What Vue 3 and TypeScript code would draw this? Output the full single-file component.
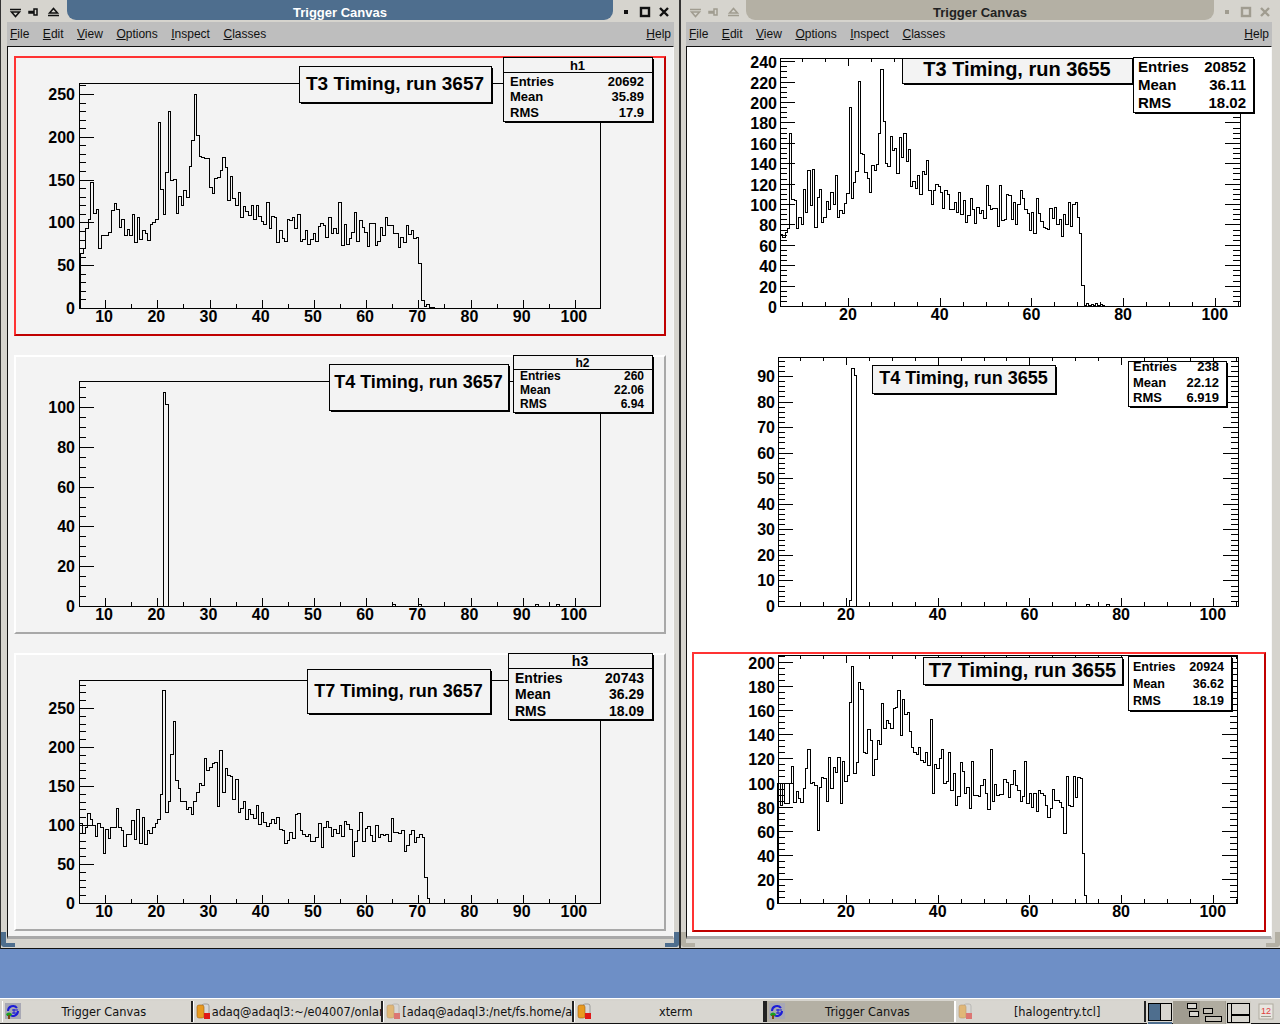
<script setup lang="ts">
interface Hist {
  ox: number // crop origin the samples were read in, values are in 3x crop pixels
  oy: number
  start: number
  bin: number
  ys: number[]
}

interface Stat {
  x: number
  y: number
  w: number
  h: number
  size: number
  head?: string
  line?: number
  fill: string
  textInset: number
  inset: number
  base: number[]
  rows: [string, string][]
}

interface Plot {
  left: number
  right: number
  top: number
  bottom: number
  labelGap: number
  labelDy: number
  labelDx: number
  mirror: boolean
  xAt: [number, number] // pixel of x = 20, pixels per unit
  xMajor: number
  yPerUnit: number
  yMajor: number
  yMinor: number
  yMax: number
  hist: Hist
  blips?: number[] // single low entries far from the peak
  title: { text: string; x: number; y: number; w: number; h: number; size: number; base: number; shadow: number }
  stat: Stat
}

interface Pad {
  x: number
  y: number
  w: number
  h: number
  kind: 'selected' | 'raised' | 'flat'
  plot: Plot
}

const t3Left = [520,503,443,418,307,400,388,505,466,466,466,455,391,370,388,442,418,466,448,466,403,485,412,478,450,460,481,433,426,418,127,328,403,277,94,300,298,400,349,376,331,352,259,181,43,166,227,232,233,233,322,340,295,291,271,230,260,361,287,354,376,335,412,379,392,406,376,418,376,408,424,431,365,445,407,410,487,449,473,484,418,421,412,445,403,484,478,451,493,478,458,484,437,428,436,472,412,459,445,458,365,496,433,493,475,455,395,482,421,442,455,499,430,430,496,482,442,466,412,436,436,459,459,502,470,487,436,463,451,475,470,550,661,678,671,680,682,684]
const t7Left = [428,458,442,398,418,436,469,430,442,520,448,475,442,442,385,442,451,499,463,463,421,478,388,490,412,493,451,460,442,430,418,343,31,397,364,223,124,301,325,364,364,388,381,403,364,337,310,316,235,271,262,250,247,379,211,337,265,286,289,358,298,397,385,364,418,388,403,415,376,433,397,427,439,430,418,430,412,448,451,490,481,457,475,403,400,451,463,469,463,484,484,472,430,502,442,424,442,469,448,460,436,469,424,433,448,529,484,451,397,484,445,438,466,484,436,472,463,466,463,484,415,457,457,460,451,514,496,463,451,487,470,463,472,592,655]
const t3Right = [552,562,545,535,250,447,451,535,502,523,418,485,361,464,358,532,442,418,517,502,454,476,427,461,376,502,481,490,460,430,170,445,395,364,94,310,313,367,385,427,346,361,343,250,56,214,340,349,259,300,295,370,262,322,250,334,298,409,394,415,376,433,364,373,331,421,463,421,403,409,427,475,421,433,476,478,457,487,427,493,451,517,496,445,478,520,472,490,481,505,406,466,478,475,475,529,406,511,508,433,436,508,457,523,463,421,445,478,490,541,487,550,445,490,514,532,535,538,475,505,472,523,508,559,493,523,457,529,463,457,502,550,706,765,760,765,762,765,760,765,762,765,768]
const t7Right = [400,466,400,460,460,400,349,455,424,445,457,415,355,298,400,397,406,541,412,382,385,454,320,415,352,367,320,460,334,394,376,157,49,370,337,97,118,307,310,238,271,376,328,271,283,160,235,211,220,235,175,172,121,256,148,193,187,244,292,307,313,292,331,337,307,346,208,430,343,355,325,298,400,394,307,421,370,466,439,337,364,430,412,475,334,436,436,439,406,388,430,478,298,454,403,436,433,433,388,397,442,403,361,406,421,454,439,334,460,430,472,430,484,421,430,436,466,502,475,418,451,451,457,472,550,379,466,469,379,442,382,385,610,736]

const leftStat = (x: number, y: number, w: number, h: number, size: number, head: string, line: number, base: number[], vals: string[]): Stat => ({
  x, y, w, h, size, head, line, base, fill: '#f3f3f3', textInset: 7, inset: 5,
  rows: [['Entries', vals[0]], ['Mean', vals[1]], ['RMS', vals[2]]],
})
const rightStat = (x: number, y: number, w: number, h: number, size: number, base: number[], vals: string[]): Stat => ({
  x, y, w, h, size, base, fill: '#ffffff', textInset: 5, inset: 4,
  rows: [['Entries', vals[0]], ['Mean', vals[1]], ['RMS', vals[2]]],
})

const leftPads: Pad[] = [
  {
    x: 14, y: 56, w: 652, h: 280, kind: 'selected',
    plot: {
      left: 79, right: 600, top: 83, bottom: 308, labelGap: 4, labelDy: 6, labelDx: -1, mirror: false,
      xAt: [157.3, 5.22], xMajor: 10, yPerUnit: 0.856, yMajor: 50, yMinor: 10, yMax: 263,
      hist: { ox: 60, oy: 80, start: 60, bin: 7.75, ys: t3Left },
      title: { text: 'T3 Timing, run 3657', x: 299, y: 66, w: 192, h: 36, size: 19, base: 90, shadow: 2 },
      stat: leftStat(503, 57, 149, 64, 13, 'h1', 72, [86, 101, 117], ['20692', '35.89', '17.9']),
    },
  },
  {
    x: 14, y: 355, w: 652, h: 279, kind: 'raised',
    plot: {
      left: 79, right: 600, top: 381, bottom: 606, labelGap: 4, labelDy: 6, labelDx: -1, mirror: false,
      xAt: [157.3, 5.22], xMajor: 10, yPerUnit: 1.99, yMajor: 20, yMinor: 5, yMax: 113,
      hist: { ox: 0, oy: 330, start: 488, bin: 7.83, ys: [187, 222] },
      blips: [392, 418, 535, 556],
      title: { text: 'T4 Timing, run 3657', x: 329, y: 364, w: 179, h: 46, size: 18, base: 388, shadow: 2 },
      stat: leftStat(513, 355, 139, 57, 12, 'h2', 369, [380, 394, 408], ['260', '22.06', '6.94']),
    },
  },
  {
    x: 14, y: 653, w: 652, h: 278, kind: 'raised',
    plot: {
      left: 79, right: 600, top: 680, bottom: 903, labelGap: 4, labelDy: 6, labelDx: -1, mirror: false,
      xAt: [157.3, 5.22], xMajor: 10, yPerUnit: 0.78, yMajor: 50, yMinor: 10, yMax: 285,
      hist: { ox: 60, oy: 680, start: 58, bin: 7.78, ys: t7Left },
      title: { text: 'T7 Timing, run 3657', x: 307, y: 669, w: 183, h: 44, size: 18, base: 697, shadow: 2 },
      stat: leftStat(508, 653, 144, 66, 14, 'h3', 668, [683, 699, 716], ['20743', '36.29', '18.09']),
    },
  },
]

const rightPads: Pad[] = [
  {
    x: 692, y: 52, w: 574, h: 288, kind: 'flat',
    plot: {
      left: 780, right: 1240, top: 58, bottom: 306, labelGap: 3, labelDy: 7, labelDx: 0, mirror: true,
      xAt: [848, 4.585], xMajor: 20, yPerUnit: 1.02, yMajor: 20, yMinor: 5, yMax: 243,
      hist: { ox: 760, oy: 50, start: 60, bin: 6.85, ys: t3Right },
      title: { text: 'T3 Timing, run 3655', x: 902, y: 58, w: 230, h: 25, size: 20, base: 76, shadow: 2 },
      stat: rightStat(1133, 57, 120, 55, 15, [72, 90, 108], ['20852', '36.11', '18.02']),
    },
  },
  {
    x: 692, y: 348, w: 574, h: 296, kind: 'flat',
    plot: {
      left: 778, right: 1238, top: 357, bottom: 606, labelGap: 3, labelDy: 6, labelDx: 0, mirror: true,
      xAt: [846, 4.585], xMajor: 20, yPerUnit: 2.556, yMajor: 10, yMinor: 2, yMax: 97,
      hist: { ox: 0, oy: 0, start: 2547, bin: 7.2, ys: [1800, 1104, 1125] },
      blips: [1086, 1106],
      title: { text: 'T4 Timing, run 3655', x: 872, y: 365, w: 183, h: 28, size: 18, base: 384, shadow: 2 },
      stat: rightStat(1128, 361, 98, 45, 13, [371, 387, 402], ['238', '22.12', '6.919']),
    },
  },
  {
    x: 692, y: 652, w: 574, h: 280, kind: 'selected',
    plot: {
      left: 778, right: 1237, top: 655, bottom: 903, labelGap: 3, labelDy: 7, labelDx: 0, mirror: true,
      xAt: [846, 4.585], xMajor: 20, yPerUnit: 1.205, yMajor: 20, yMinor: 5, yMax: 205,
      hist: { ox: 760, oy: 650, start: 52, bin: 6.92, ys: t7Right },
      title: { text: 'T7 Timing, run 3655', x: 923, y: 657, w: 199, h: 27, size: 20, base: 677, shadow: 2 },
      stat: rightStat(1128, 656, 103, 54, 12.5, [671, 688, 705], ['20924', '36.62', '18.19']),
    },
  },
]

const windows = [
  { title: 'Trigger Canvas', active: true, pads: leftPads },
  { title: 'Trigger Canvas', active: false, pads: rightPads },
]

const menus = [
  ['F', 'ile'],
  ['E', 'dit'],
  ['V', 'iew'],
  ['O', 'ptions'],
  ['I', 'nspect'],
  ['C', 'lasses'],
]

const tasks = [
  { label: 'Trigger Canvas', icon: 'root', dim: false, current: false },
  { label: 'adaq@adaql3:~/e04007/onlar', icon: 'term', dim: false, current: false },
  { label: '[adaq@adaql3:/net/fs.home/a', icon: 'term', dim: true, current: false },
  { label: 'xterm', icon: 'term', dim: false, current: false },
  { label: 'Trigger Canvas', icon: 'root', dim: false, current: true },
  { label: '[halogentry.tcl]', icon: 'term', dim: true, current: false },
]

const snap = (v: number) => Math.round(v) + 0.5

function histPath(p: Plot) {
  const h = p.hist
  const px = (z: number) => h.ox + z / 3
  let d = `M${snap(px(h.start))} ${snap(p.bottom)}`
  h.ys.forEach((y, i) => {
    d += `V${snap(h.oy + y / 3)}H${snap(px(h.start + (i + 1) * h.bin))}`
  })
  d += `V${snap(p.bottom)}`
  for (const x of p.blips ?? []) d += `M${x + 0.5} ${p.bottom}v-2h3v2`
  return d
}

function ticksPath(p: Plot) {
  let d = ''
  for (let v = 0; v <= p.yMax; v += p.yMinor) {
    const y = snap(p.bottom - v * p.yPerUnit)
    const len = v % p.yMajor === 0 ? 15 : 7
    d += `M${p.left} ${y}h${len}`
    if (p.mirror) d += `M${p.right} ${y}h${-len}`
  }
  for (let v = 5; v <= 105; v += 5) {
    const x = snap(p.xAt[0] + (v - 20) * p.xAt[1])
    if (x <= p.left || x >= p.right) continue
    const len = v % p.xMajor === 0 ? 8 : 4
    d += `M${x} ${p.bottom}v${-len}`
    if (p.mirror) d += `M${x} ${p.top}v${len}`
  }
  return d
}

function yLabels(p: Plot) {
  const out: { t: number; y: number }[] = []
  for (let v = 0; v <= p.yMax; v += p.yMajor) out.push({ t: v, y: p.bottom - v * p.yPerUnit + p.labelDy })
  return out
}

function xLabels(p: Plot) {
  const out: { t: number; x: number }[] = []
  for (let v = p.xMajor; v <= 100; v += p.xMajor) out.push({ t: v, x: p.xAt[0] + (v - 20) * p.xAt[1] + p.labelDx })
  return out
}
</script>

<template>
  <div class="desktop">
    <div class="windows">
      <section v-for="(win, w) in windows" :key="w" class="window" :class="win.active ? 'active' : 'inactive'">
        <header class="titlebar">
          <svg class="btns-left" width="66" height="22" viewBox="0 0 66 22">
            <path d="M9 9.5h11M10.5 12h8l-4 4.5z" />
            <path d="M28 11.5h5v-2.5h3v6h-3v-2h-5z" />
            <path d="M47 15.5h11M48.5 13h8l-4-4.5z" />
          </svg>
          <div class="title-text">{{ win.title }}</div>
          <svg class="btns-right" width="66" height="22" viewBox="0 0 66 22">
            <rect class="solid" x="11" y="10" width="4" height="4" />
            <rect class="thick" x="28" y="8" width="8" height="8" />
            <path class="thick" d="M47 8l8 8M55 8l-8 8" />
          </svg>
        </header>
        <div class="win-body">
          <nav class="menubar">
            <span v-for="m in menus" :key="m[0]"><u>{{ m[0] }}</u>{{ m[1] }}</span>
            <span class="help"><u>H</u>elp</span>
          </nav>
          <main class="canvas">
            <div
              v-for="pad in win.pads"
              :key="pad.y"
              class="pad"
              :class="pad.kind"
              :style="{ width: pad.w + 'px', height: pad.h + 'px' }"
            >
              <svg
                class="plot"
                :width="pad.w - 4"
                :height="pad.h - 4"
                :viewBox="`${pad.x + 2} ${pad.y + 2} ${pad.w - 4} ${pad.h - 4}`"
              >
                <rect class="frame" :x="pad.plot.left + 0.5" :y="pad.plot.top + 0.5" :width="pad.plot.right - pad.plot.left" :height="pad.plot.bottom - pad.plot.top" />
                <path class="line" :d="ticksPath(pad.plot)" />
                <path class="line" :d="histPath(pad.plot)" />
                <text
                  v-for="l in yLabels(pad.plot)"
                  :key="'y' + l.t"
                  class="axis-label"
                  text-anchor="end"
                  :x="pad.plot.left - pad.plot.labelGap"
                  :y="l.y"
                >{{ l.t }}</text>
                <text
                  v-for="l in xLabels(pad.plot)"
                  :key="'x' + l.t"
                  class="axis-label"
                  text-anchor="middle"
                  :x="l.x"
                  :y="pad.plot.bottom + 14"
                >{{ l.t }}</text>

                <!-- title box -->
                <rect :x="pad.plot.title.x + pad.plot.title.shadow" :y="pad.plot.title.y + pad.plot.title.shadow" :width="pad.plot.title.w" :height="pad.plot.title.h" />
                <rect class="box" :x="pad.plot.title.x + 0.5" :y="pad.plot.title.y + 0.5" :width="pad.plot.title.w" :height="pad.plot.title.h" />
                <text
                  class="title"
                  text-anchor="middle"
                  :font-size="pad.plot.title.size"
                  :x="pad.plot.title.x + pad.plot.title.w / 2"
                  :y="pad.plot.title.base"
                >{{ pad.plot.title.text }}</text>

                <!-- stats box -->
                <rect :x="pad.plot.stat.x + 2" :y="pad.plot.stat.y + 2" :width="pad.plot.stat.w" :height="pad.plot.stat.h" />
                <rect
                  class="box"
                  :style="{ fill: pad.plot.stat.fill }"
                  :x="pad.plot.stat.x + 0.5"
                  :y="pad.plot.stat.y + 0.5"
                  :width="pad.plot.stat.w"
                  :height="pad.plot.stat.h"
                />
                <template v-if="pad.plot.stat.head">
                  <path class="line" :d="`M${pad.plot.stat.x} ${pad.plot.stat.line! + 0.5}h${pad.plot.stat.w}`" />
                  <text
                    class="stat"
                    text-anchor="middle"
                    :font-size="pad.plot.stat.size"
                    :x="pad.plot.stat.x + pad.plot.stat.w / 2"
                    :y="pad.plot.stat.line! - 2"
                  >{{ pad.plot.stat.head }}</text>
                </template>
                <template v-for="(row, r) in pad.plot.stat.rows" :key="row[0]">
                  <text class="stat" :font-size="pad.plot.stat.size" :x="pad.plot.stat.x + pad.plot.stat.textInset" :y="pad.plot.stat.base[r]">{{ row[0] }}</text>
                  <text
                    class="stat"
                    text-anchor="end"
                    :font-size="pad.plot.stat.size"
                    :x="pad.plot.stat.x + pad.plot.stat.w - pad.plot.stat.inset - 3"
                    :y="pad.plot.stat.base[r]"
                  >{{ row[1] }}</text>
                </template>
              </svg>
            </div>
          </main>
        </div>
        <!-- resize handles -->
        <span class="handle h-left"></span>
        <span class="handle h-right"></span>
      </section>
    </div>

    <footer class="taskbar">
      <div
        v-for="(task, t) in tasks"
        :key="t"
        class="task"
        :class="{ current: task.current }"
      >
        <svg class="task-icon" :class="{ dim: task.dim }" width="16" height="17" viewBox="0 0 16 17">
          <template v-if="task.icon === 'root'">
            <rect width="16" height="16" fill="#a8a8b4" />
            <path d="M3 8a5 5 0 0 1 9-3M13 8a5 5 0 0 1-9 3" fill="none" stroke="#1c1cd8" stroke-width="2" />
            <path d="M9 6v5M7 7h6M7 10h6" stroke="#1c1cd8" fill="none" />
            <path d="M1 11q3-3 6 0l-1 2h-4z" fill="#18a020" />
            <rect x="3" y="12" width="2" height="4" fill="#7a4a10" />
          </template>
          <template v-else>
            <rect x="6" y="1" width="7" height="13" rx="2" fill="#d8d8d8" stroke="#777" stroke-width="0.6" />
            <rect x="1" y="2" width="7" height="13" rx="2" fill="#e89a20" stroke="#a06010" stroke-width="0.6" />
            <rect x="8" y="10" width="6" height="6" fill="#e01818" />
          </template>
        </svg>
        <span class="task-label">{{ task.label }}</span>
      </div>

      <svg class="pager" width="104" height="24" viewBox="0 0 104 24">
        <rect x="0" y="0" width="25" height="24" fill="#d8d6d0" />
        <rect x="1.5" y="2.5" width="12" height="17" fill="#4e6e8e" stroke="#000" />
        <rect x="13.5" y="2.5" width="11" height="17" fill="#d8d6d0" stroke="#000" />
        <rect x="1" y="21" width="24" height="2" fill="#4e6e8e" />
        <rect x="26" y="0" width="77" height="24" fill="#a09c90" />
        <rect x="40.5" y="2.5" width="9" height="5" fill="#d8d6d0" stroke="#000" />
        <rect x="42.5" y="10.5" width="9" height="5" fill="#d8d6d0" stroke="#000" />
        <rect x="53" y="0" width="25" height="24" fill="#b0aca0" />
        <rect x="56.5" y="7.5" width="9" height="5" fill="#c4c0b6" stroke="#000" />
        <rect x="58.5" y="15.5" width="16" height="5" fill="#c4c0b6" stroke="#000" />
        <rect x="79" y="0" width="25" height="24" fill="#d0cec6" />
        <rect x="80.5" y="2.5" width="4" height="19" fill="#d8d6d0" stroke="#000" />
        <rect x="84.5" y="2.5" width="18" height="11" fill="#d8d6d0" stroke="#000" />
        <rect x="84.5" y="14.5" width="18" height="7" fill="#d8d6d0" stroke="#000" />
      </svg>
      <svg class="clock" width="16" height="18" viewBox="0 0 16 18">
        <rect x="1" y="1" width="14" height="15" fill="#e8e6e0" stroke="#b0aca0" />
        <text x="8" y="11" text-anchor="middle" class="clock-day">12</text>
        <rect x="3" y="13" width="10" height="1" fill="#a09c90" />
      </svg>
    </footer>
  </div>
</template>

<style>
html,
body {
  margin: 0;
  padding: 0;
}
</style>

<style scoped>
.desktop {
  width: 1280px;
  height: 1024px;
  display: flex;
  flex-direction: column;
  background: #6e8fc6;
  overflow: hidden;
  font-family: "Liberation Sans", Arial, sans-serif;
}

.windows {
  display: flex;
  height: 949px;
}

.window {
  position: relative;
  display: flex;
  flex-direction: column;
  box-sizing: border-box;
  height: 949px;
  background: #d6d4ce;
  border-bottom: 1px solid #111;
}

.window.active {
  width: 680px;
  border-left: 1px solid #333;
  border-right: 1px solid #333;
  --accent: #4e6e8e;
}

.window.inactive {
  width: 600px;
  border-left: 1px solid #333;
  --accent: #b4b0a4;
}

.titlebar {
  display: flex;
  flex: none;
  height: 22px;
}

.titlebar svg {
  flex: none;
  fill: none;
  stroke: #111;
  stroke-width: 1.5;
}

.inactive .titlebar svg {
  stroke: #a09c90;
}

.inactive .btns-left {
  margin-right: -1px;
}

.titlebar .solid {
  fill: #111;
  stroke: none;
}

.inactive .titlebar .solid {
  fill: #a09c90;
}

.titlebar .thick {
  stroke-width: 2.4;
}

.title-text {
  flex: 1;
  height: 20px;
  line-height: 26px;
  text-align: center;
  font-size: 13px;
  font-weight: bold;
  color: #fff;
  background: var(--accent);
  border-radius: 0 0 9px 9px;
}

.inactive .title-text {
  color: #222;
}

.win-body {
  flex: 1;
  display: flex;
  flex-direction: column;
  min-height: 0;
  padding: 0 5px 9px 6px;
}

.inactive .win-body {
  padding: 0 8px 9px 5px;
}

.menubar {
  flex: none;
  display: flex;
  gap: 13.5px;
  height: 24px;
  padding: 0 3px;
  align-items: center;
  background: #bebebe;
  font-size: 12px;
  color: #111;
}

.menubar .help {
  margin-left: auto;
}

.canvas {
  flex: 1;
  min-height: 0;
  box-sizing: border-box;
  display: flex;
  flex-direction: column;
  gap: 19px;
  padding: 9px 0 0 6px;
  background: #f3f3f3;
  border-top: 1px solid #111;
  border-left: 1px solid #111;
  border-right: 1px solid #f8f8f8;
  border-bottom: 3px solid #a8a8a8;
}

.inactive .canvas {
  gap: 8px;
  padding: 5px 0 0 5px;
  background: #fff;
}

.pad {
  flex: none;
  box-sizing: border-box;
  border: 2px solid transparent;
}

.pad.selected {
  border-color: #ff3333 #c00000 #c00000 #ff3333;
}

.pad.raised {
  border-color: #fff #a8a8a8 #a8a8a8 #fff;
}

.plot {
  display: block;
  overflow: visible;
  shape-rendering: crispEdges;
}

.line {
  fill: none;
  stroke: #000;
  stroke-width: 1;
}

.frame {
  fill: none;
  stroke: #000;
  stroke-width: 1;
}

.box {
  fill: #f3f3f3;
  stroke: #000;
  stroke-width: 1;
}

.axis-label {
  font: bold 16px "Liberation Sans", Arial, sans-serif;
}

.title {
  font-family: "Liberation Sans", Arial, sans-serif;
  font-weight: bold;
}

.stat {
  font-family: "Liberation Sans", Arial, sans-serif;
  font-weight: bold;
}

.handle {
  position: absolute;
  bottom: 1px;
  width: 14px;
  height: 15px;
  box-sizing: border-box;
  border-bottom: 4px solid var(--accent);
}

.h-left {
  left: 0;
  border-left: 5px solid var(--accent);
  border-bottom-left-radius: 4px;
}

.h-right {
  right: 0;
  border-right: 5px solid var(--accent);
  border-bottom-right-radius: 4px;
}

.taskbar {
  margin-top: auto;
  flex: none;
  box-sizing: border-box;
  height: 26px;
  display: flex;
  align-items: stretch;
  padding: 2px 0 1px 2px;
  background: #d6d4ce;
  border-top: 1px solid #fff;
  border-bottom: 1px solid #111;
  font-family: "DejaVu Sans", sans-serif;
  font-size: 11.4px;
  color: #111;
}

.task {
  flex: none;
  box-sizing: border-box;
  width: 190.67px;
  display: flex;
  align-items: center;
  padding: 0 1px 0 2px;
  background: #d8d6d0;
  border-right: 2px solid #222;
  border-left: 1px solid #fff;
  overflow: hidden;
}

.task.current {
  background: #b4b0a4;
  border-left: 2px solid #222;
  border-right: 1px solid #fff;
}

.task-icon {
  flex: none;
}

.task-icon.dim {
  opacity: 0.5;
}

.task-label {
  flex: 1;
  min-width: 0;
  text-align: center;
  white-space: nowrap;
  padding-right: 3px;
}

.pager {
  flex: none;
  margin-left: 1px;
  shape-rendering: crispEdges;
}

.clock {
  flex: none;
  margin: 2px 0 0 7px;
}

.clock-day {
  font: 9px "Liberation Sans", Arial, sans-serif;
  fill: #e04040;
}
</style>
